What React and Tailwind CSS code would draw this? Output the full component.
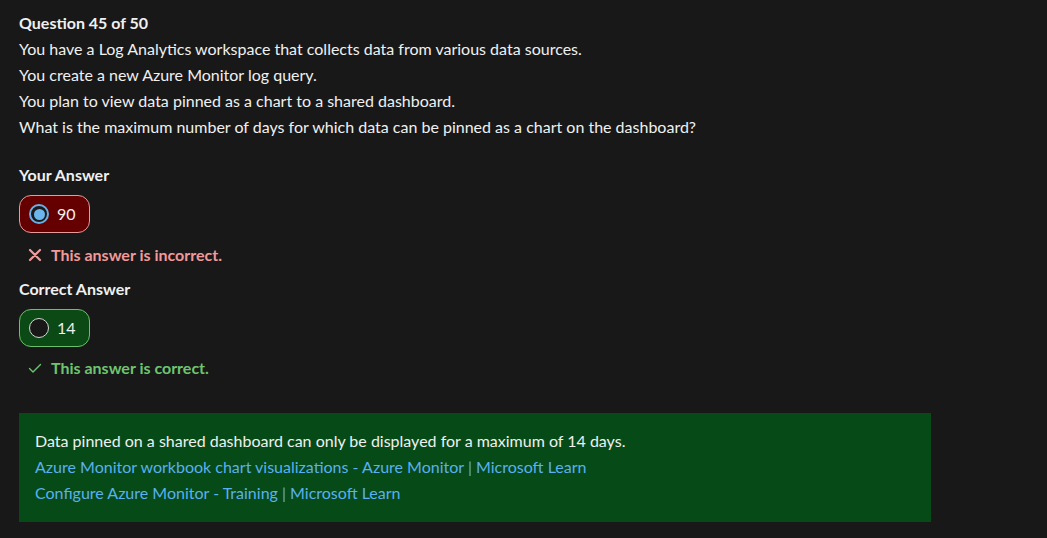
export default function App() {
  return (
    <div className="min-h-[538px] bg-[#181818] px-[19px] pt-[10px] text-[16px] leading-[26px] text-[#f0f0f0] font-['Lato','Open_Sans',sans-serif]">
      <h1 className="font-bold">Question 45 of 50</h1>
      <p>You have a Log Analytics workspace that collects data from various data sources.</p>
      <p>You create a new Azure Monitor log query.</p>
      <p>You plan to view data pinned as a chart to a shared dashboard.</p>
      <p>What is the maximum number of days for which data can be pinned as a chart on the dashboard?</p>

      <div className="mt-[22px] font-bold">Your Answer</div>
      <div className="mt-[7px] flex h-[38px] w-[71px] items-center gap-2 rounded-[12px] border border-[#e69a9a] bg-[#640000] pl-[9px]">
        <span className="flex h-[20px] w-[20px] items-center justify-center rounded-full border-2 border-[#6ab0e6] bg-[#1b1b1b]">
          <span className="h-[11px] w-[11px] rounded-full bg-[#6cb6ee]" />
        </span>
        <span>90</span>
      </div>
      <div className="mt-[9px] flex items-center gap-[9px] pl-[9px] font-bold text-[#f09a9a]">
        <svg width="14" height="14" viewBox="0 0 14 14" stroke="#f09a9a" strokeWidth="2.2" strokeLinecap="round">
          <path d="M2 2L12 12M12 2L2 12" />
        </svg>
        <span>This answer is incorrect.</span>
      </div>

      <div className="mt-[8px] font-bold">Correct Answer</div>
      <div className="mt-[7px] flex h-[38px] w-[71px] items-center gap-2 rounded-[12px] border border-[#6cbf6c] bg-[#0b4a14] pl-[9px]">
        <span className="h-[20px] w-[20px] rounded-full border-[1.5px] border-[#d6d6d6] bg-[#181818]" />
        <span>14</span>
      </div>
      <div className="mt-[8px] flex items-center gap-[9px] pl-[9px] font-bold text-[#6fc46f]">
        <svg width="14" height="14" viewBox="0 0 14 14" fill="none" stroke="#6fc46f" strokeWidth="1.4" strokeLinecap="round" strokeLinejoin="round">
          <path d="M1.5 7.5L5 11L12.5 3.5" />
        </svg>
        <span>This answer is correct.</span>
      </div>

      <div className="mt-[32px] w-[912px] bg-[#064a17] px-[16px] pt-[15px] pb-[16px]">
        <p>Data pinned on a shared dashboard can only be displayed for a maximum of 14 days.</p>
        <p className="text-[#5ab0f0]">Azure Monitor workbook chart visualizations - Azure Monitor | Microsoft Learn</p>
        <p className="text-[#5ab0f0]">Configure Azure Monitor - Training | Microsoft Learn</p>
      </div>
    </div>
  );
}
